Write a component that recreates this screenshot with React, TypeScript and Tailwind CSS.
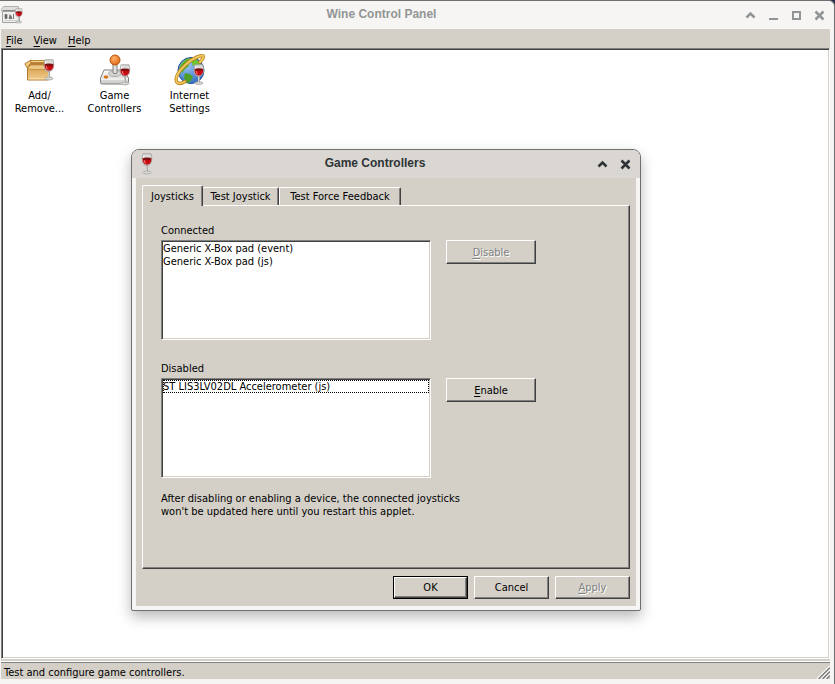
import type { ReactNode } from "react";

const raised =
  "border border-t-white border-l-white border-r-[#404040] border-b-[#404040] shadow-[inset_-1px_-1px_0_#808080]";

const Glass = ({ x = 0, y = 0, scale = 1 }: { x?: number; y?: number; scale?: number }) => (
  <g transform={`translate(${x} ${y}) scale(${scale})`}>
    <ellipse cx="6" cy="19.5" rx="4.2" ry="1.4" fill="#dcdcd8" stroke="#a2a29e" strokeWidth=".8" />
    <path d="M6 12v7" stroke="#9c9c98" strokeWidth="2" />
    <path d="M5.8 12v7" stroke="#e9e9e6" strokeWidth=".8" />
    <path d="M2 .8h8c1.400 5 1.200 11-4 11.700S.6 5.800 2 .8z" fill="#dcdcd9" stroke="#a3a3a0" strokeWidth=".9" />
    <path d="M1.600 5.600h8.800c.2 3.400-1.200 6-4.400 6.200-3.200-.2-4.600-2.800-4.400-6.200z" fill="#c40d12" />
    <ellipse cx="6" cy="5.700" rx="4.300" ry="1.300" fill="#7c1013" />
    <path d="M3.200 7.200c.1 1.400.7 2.500 1.600 3.100" stroke="#f58a84" strokeWidth="1" fill="none" />
    <path d="M3 2l-.5 2.500" stroke="#fff" strokeWidth="1" />
  </g>
);

const PanelIcon = () => (
  <svg width="24" height="20" viewBox="0 0 24 20">
    <path d="M3.500 1.500h15v3L20 6H1.500V4.500z" fill="#dededb" stroke="#b0b0ad" />
    <path d="M2.500 6.500h17v11h-17z" fill="#f0f0ee" stroke="#a2a29f" />
    <path d="M3 5.500h15" stroke="#8a8a87" />
    <path d="M5.500 9v4M9.500 9v4M13.500 9v4" stroke="#b0b0ad" />
    <path d="M5 9.500h2v4h-2zM9 13.500l1.500-3.500 1.500 3.500zM13.500 9v5" fill="#6b6d69" stroke="#6b6d69" strokeWidth=".8" />
    <path d="M4 15.500h14" stroke="#cfcfcc" />
    <Glass x={14.500} y={3} scale={0.72} />
  </svg>
);

const BoxIcon = () => (
  <svg width="32" height="32" viewBox="0 0 32 32">
    <defs>
      <linearGradient id="box" x1="0" y1="0" x2="0" y2="1">
        <stop offset="0" stopColor="#d9a252" />
        <stop offset="1" stopColor="#f0cd8e" />
      </linearGradient>
    </defs>
    <path d="M6.500 6.500h17l2 6v2h-21z" fill="#b57b31" stroke="#ae7424" />
    <path d="M3.500 13.500h21v12.500h-21z" fill="url(#box)" stroke="#b27a2b" />
    <path d="M4.500 24.800h18" stroke="#f9e2b6" />
    <path d="M6.500 6.200L.8 9.800l2 3.700 4-4z" fill="#f0c983" stroke="#b27a2b" strokeWidth=".9" />
    <path d="M6.500 6.500h16.500v2h-16z" fill="#f4d497" stroke="#b27a2b" strokeWidth=".7" />
    <path d="M4 13.500l3-2.500h17.500l-1.500 4.500h-17z" fill="#efc785" stroke="#c18a3b" strokeWidth=".8" />
    <Glass x={19} y={5} scale={1} />
  </svg>
);

const JoystickIcon = () => (
  <svg width="32" height="32" viewBox="0 0 32 32">
    <defs>
      <linearGradient id="base" x1="0" y1="0" x2="0" y2="1">
        <stop offset="0" stopColor="#fff" />
        <stop offset="1" stopColor="#c9cac7" />
      </linearGradient>
      <radialGradient id="ball" cx=".4" cy=".35" r=".7">
        <stop offset="0" stopColor="#ffb36a" />
        <stop offset="1" stopColor="#de6412" />
      </radialGradient>
    </defs>
    <path d="M5 16h20l4.500 8v4.500q0 1.500-1.500 1.500H3q-1.500 0-1.500-1.500V24z" fill="url(#base)" stroke="#80827e" />
    <path d="M2 25h27" stroke="#fff" />
    <ellipse cx="16" cy="19.500" rx="6.500" ry="3" fill="#d4d5d2" stroke="#a0a19e" strokeWidth=".8" />
    <path d="M14 10h4v9q-2 1.500-4 0z" fill="#e0e1de" stroke="#777975" strokeWidth=".9" />
    <circle cx="16" cy="6" r="5" fill="url(#ball)" stroke="#b8560f" />
    <ellipse cx="7" cy="23" rx="2" ry="1.200" fill="#f57900" stroke="#b8560f" strokeWidth=".6" />
    <Glass x={20} y={10} scale={1} />
  </svg>
);

const GlobeIcon = () => (
  <svg width="32" height="32" viewBox="0 0 32 32">
    <defs>
      <radialGradient id="sea" cx=".35" cy=".3" r=".8">
        <stop offset="0" stopColor="#9cc6f5" />
        <stop offset="1" stopColor="#2c68bd" />
      </radialGradient>
    </defs>
    <circle cx="17" cy="16.500" r="13" fill="url(#sea)" stroke="#1f4f92" />
    <path d="M7 10l5-5 5-1 1 3-4 2 1 3-4 3-3 4-3-4z" fill="#5eb32a" />
    <path d="M18 6l4-1 4 4 2 5-4 2-3-4-3-1z" fill="#6fc235" />
    <path d="M11 19l5 1 3 3-3 5-3 1-3-5z" fill="#4d9f26" />
    <path
      d="M26 8c5-5 4-7.500 0-6C17 4.500 5 15 2.500 23c-1.500 7 3 8 8.500 4.500"
      fill="none"
      stroke="#b47d16"
      strokeWidth="3.400"
      strokeLinecap="round"
    />
    <path
      d="M26 8c5-5 4-7.500 0-6C17 4.500 5 15 2.500 23c-1.500 7 3 8 8.500 4.500"
      fill="none"
      stroke="#f0c85f"
      strokeWidth="2"
      strokeLinecap="round"
    />
    <Glass x={19} y={10} scale={0.98} />
  </svg>
);

const glyphs = {
  shade: <path d="M1.500 8.500l4-4 4 4" />,
  minimize: <path d="M1 10h9" strokeWidth="2" />,
  maximize: <path d="M2 3h7v7H2z" strokeWidth="2" />,
  close: <path d="M1.500 2.500l8 8M9.500 2.500l-8 8" />,
};

const WindowButton = ({ name }: { name: keyof typeof glyphs }) => (
  <button type="button" aria-label={name} className="flex h-6 w-[23px] items-center justify-center">
    <svg width="12" height="12" viewBox="0 0 12 12" fill="none" stroke="currentColor" strokeWidth="2.500">
      {glyphs[name]}
    </svg>
  </button>
);

const Hot = ({ text }: { text: string }) => (
  <span>
    <span className="underline underline-offset-2">{text[0]}</span>
    {text.slice(1)}
  </span>
);

const Launcher = ({ icon, lines }: { icon: ReactNode; lines: string[] }) => (
  <button type="button" className="flex w-[75px] flex-col items-center gap-[3px]">
    {icon}
    <span>
      {lines.map((line) => (
        <span key={line} className="block">
          {line}
        </span>
      ))}
    </span>
  </button>
);

const PushButton = ({ children, disabled, size }: { children: ReactNode; disabled?: boolean; size: string }) => (
  <button
    type="button"
    disabled={disabled}
    className={`${raised} ${size} disabled:text-[#808080] disabled:[text-shadow:1px_1px_0_#fff]`}
  >
    {children}
  </button>
);

type DeviceListProps = { id: string; label: string; devices: string[]; focused?: boolean; children: ReactNode };

const DeviceList = ({ id, label, devices, focused, children }: DeviceListProps) => (
  <div>
    <label htmlFor={id} className="mb-[3px] block">
      {label}
    </label>
    <div className="flex items-start gap-[15px]">
      <select
        id={id}
        size={7}
        className="h-[100px] w-[270px] appearance-none overflow-hidden rounded-none border border-t-[#808080] border-r-white border-b-white border-l-[#808080] bg-white p-px shadow-[inset_1px_1px_0_#404040,inset_-1px_-1px_0_#d4d0c8] outline-none"
      >
        {devices.map((device) => (
          <option
            key={device}
            className={`h-[13px] min-h-0 p-0 leading-[14px] ${focused ? "outline-1 -outline-offset-1 outline-dotted outline-black" : ""}`}
          >
            {device}
          </option>
        ))}
      </select>
      {children}
    </div>
  </div>
);

const tabBase = "relative border-t border-l border-white rounded-t-[2px] border-r border-r-[#404040] shadow-[inset_-1px_0_0_#808080]";

const GameControllers = () => (
  <section
    role="dialog"
    aria-labelledby="dialog-title"
    className="absolute top-[149px] left-[131px] w-[510px] rounded-t-lg rounded-b-[2px] border border-[#707070] bg-[#f6f5f4] shadow-[0_6px_14px_rgba(0,0,0,0.28)]"
  >
    <header className="flex h-7 items-center rounded-t-[7px] bg-[#dad6d2] px-[3px] text-[#2e3436]">
      <div className="flex w-6 justify-center">
        <svg width="12" height="22" viewBox="0 0 12 22">
          <Glass />
        </svg>
      </div>
      <h2 id="dialog-title" className="flex-1 pb-0.5 text-center font-['Liberation_Sans',sans-serif] text-xs font-bold">
        Game Controllers
      </h2>
      <WindowButton name="shade" />
      <WindowButton name="close" />
    </header>

    <div className="mx-1 mb-1 bg-[#d4d0c8] px-1.5 pt-[7px] pb-[7px]">
      <div role="tablist" className="flex items-end">
        <button type="button" role="tab" aria-selected="true" className={`${tabBase} z-10 -mb-px h-[21px] w-[61px] bg-[#d4d0c8]`}>
          Joysticks
        </button>
        <button type="button" role="tab" aria-selected="false" className={`${tabBase} h-[18px] w-[76px] border-l-0`}>
          Test Joystick
        </button>
        <button type="button" role="tab" aria-selected="false" className={`${tabBase} h-[18px] w-[122px]`}>
          Test Force Feedback
        </button>
      </div>
      <div role="tabpanel" className={`${raised} px-[18px] pt-[18px] pb-[50px]`}>
        <div className="flex flex-col gap-[22px]">
          <DeviceList id="connected" label="Connected" devices={["Generic X-Box pad (event)", "Generic X-Box pad (js)"]}>
            <PushButton disabled size="h-6 w-[90px]">
              <Hot text="Disable" />
            </PushButton>
          </DeviceList>
          <DeviceList id="disabled" label="Disabled" devices={["ST LIS3LV02DL Accelerometer (js)"]} focused>
            <PushButton size="h-6 w-[90px]">
              <Hot text="Enable" />
            </PushButton>
          </DeviceList>
        </div>
        <p className="mt-3.5">
          After disabling or enabling a device, the connected joysticks
          <br />
          won't be updated here until you restart this applet.
        </p>
      </div>
      <div className="mt-[7px] flex justify-end gap-1.5">
        <div className="border border-black">
          <PushButton size="h-[21px] w-[73px]">OK</PushButton>
        </div>
        <PushButton size="h-[23px] w-[75px]">Cancel</PushButton>
        <PushButton disabled size="h-[23px] w-[75px]">
          <Hot text="Apply" />
        </PushButton>
      </div>
    </div>
  </section>
);

export default function App() {
  return (
    <div className="relative min-h-screen bg-[#25294f] font-['DejaVu_Sans_Condensed','DejaVu_Sans',sans-serif] text-[11px] leading-[13px] text-black">
      <div className="flex min-h-screen flex-col rounded-tr-md border-t border-r border-[#707070] bg-[#f6f5f4]">
        <header className="flex h-7 items-center pr-[3px] text-[#929595]">
          <div className="flex w-6 justify-center">
            <PanelIcon />
          </div>
          <h1 className="flex-1 pb-0.5 text-center font-['Liberation_Sans',sans-serif] text-xs font-bold">Wine Control Panel</h1>
          <WindowButton name="shade" />
          <WindowButton name="minimize" />
          <WindowButton name="maximize" />
          <WindowButton name="close" />
        </header>

        <main className="mr-1 mb-[5px] ml-px flex flex-1 flex-col bg-[#d4d0c8]">
          <nav className="flex h-[19px] items-center gap-[11px] px-[5px] pt-[3px]">
            <button type="button"><Hot text="File" /></button>
            <button type="button"><Hot text="View" /></button>
            <button type="button"><Hot text="Help" /></button>
          </nav>
          <div className="flex flex-1 items-start border border-t-[#808080] border-r-white border-b-white border-l-[#808080] bg-white pt-[5px] shadow-[inset_1px_1px_0_#404040,inset_-1px_-1px_0_#d4d0c8]">
            <Launcher icon={<BoxIcon />} lines={["Add/", "Remove..."]} />
            <Launcher icon={<JoystickIcon />} lines={["Game", "Controllers"]} />
            <Launcher icon={<GlobeIcon />} lines={["Internet", "Settings"]} />
          </div>
          <footer className="mt-0.5 border-t border-t-white">
            <div className="flex h-[17px] items-end justify-between border-t border-t-[#808080] pl-[3px]">
              <span className="self-center pt-0.5">Test and configure game controllers.</span>
              <svg width="13" height="13" viewBox="0 0 13 13" strokeWidth="1.500">
                <path d="M0 13L13 0M4 13l9-9M8 13l5-5" stroke="#fff" />
                <path d="M1.500 13L13 1.500M5.500 13L13 5.500M9.500 13L13 9.500" stroke="#808080" />
              </svg>
            </div>
          </footer>
        </main>
      </div>
      <GameControllers />
    </div>
  );
}
